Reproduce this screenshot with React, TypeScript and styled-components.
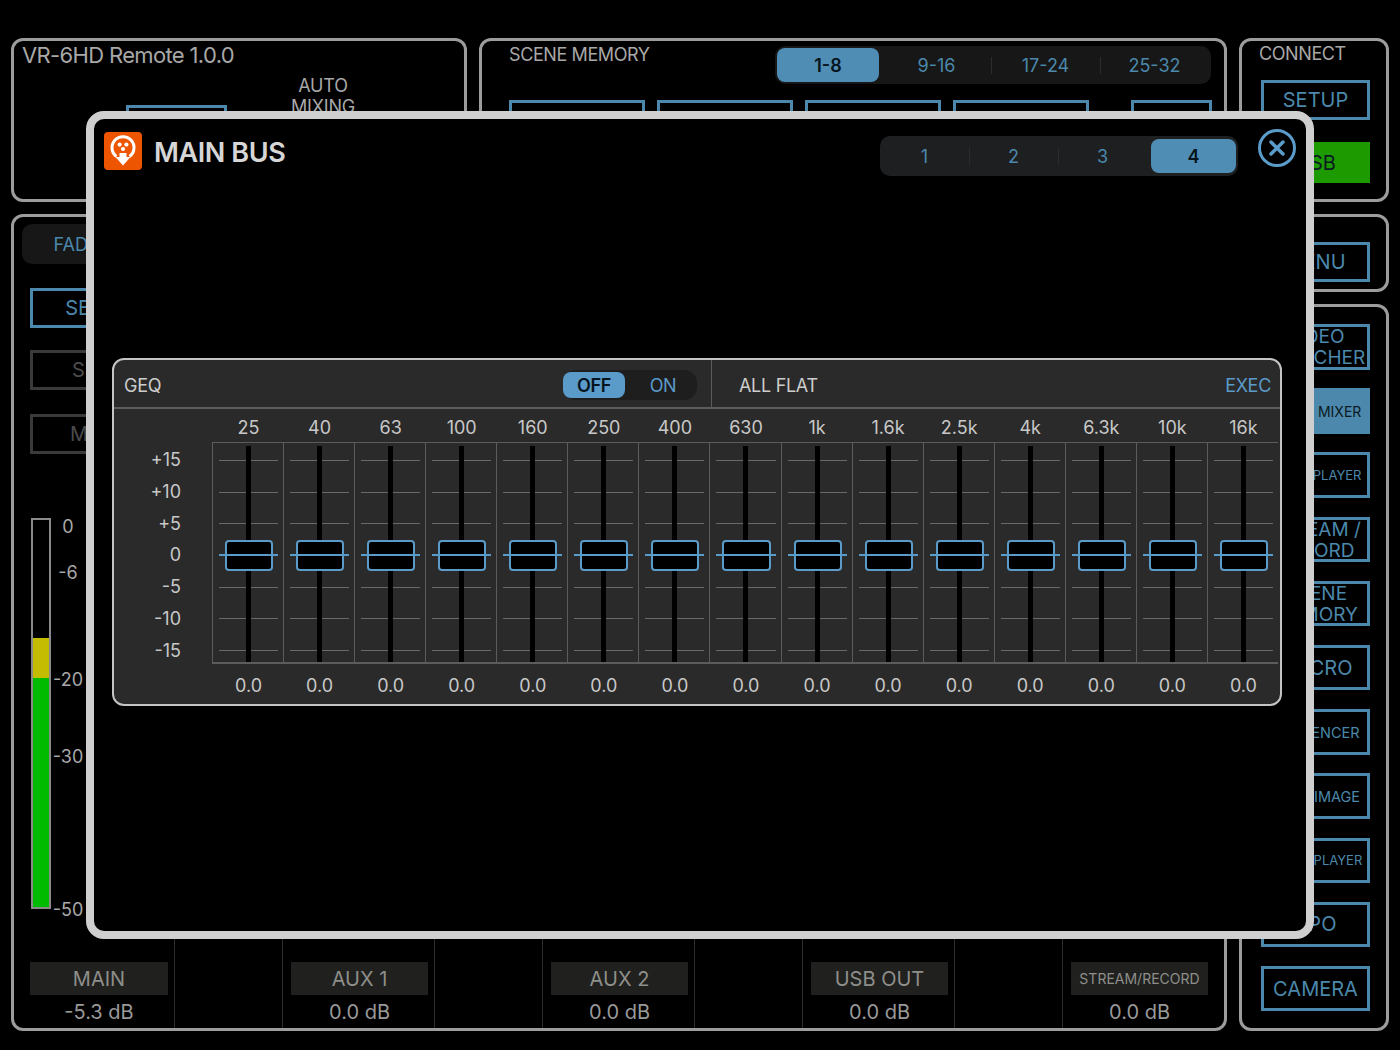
import { Fragment } from "react";
import styled, { createGlobalStyle } from "styled-components";

const BLUE = "#4b88ab";
const BRIGHT = "#5b9bc9";
const FONT = `Inter, "Liberation Sans", sans-serif`;

const FREQS = ["25", "40", "63", "100", "160", "250", "400", "630", "1k", "1.6k", "2.5k", "4k", "6.3k", "10k", "16k"];
const SCALE = ["+15", "+10", "+5", "0", "-5", "-10", "-15"];
const SIDE_BUTTONS = [
    { label: "VIDEO\nSWITCHER", size: 19 },
    { label: "AUDIO MIXER", size: 14, active: true },
    { label: "VIDEO PLAYER", size: 13 },
    { label: "STREAM /\nRECORD", size: 19 },
    { label: "SCENE\nMEMORY", size: 19 },
    { label: "MACRO", size: 20 },
    { label: "SEQUENCER", size: 14.5 },
    { label: "STILL IMAGE", size: 14.5 },
    { label: "AUDIO PLAYER", size: 13 },
    { label: "VPO", size: 20 },
    { label: "CAMERA", size: 20 },
];
const CHANNELS = [
    { name: "MAIN", value: "-5.3 dB" },
    { name: "AUX 1", value: "0.0 dB" },
    { name: "AUX 2", value: "0.0 dB" },
    { name: "USB OUT", value: "0.0 dB" },
    { name: "STREAM/RECORD", value: "0.0 dB", small: true },
];

const GlobalStyle = createGlobalStyle`
    html, body { margin: 0; padding: 0; background: #000; }
    * { box-sizing: border-box; }
`;

const Page = styled.div`
    position: relative;
    width: 1400px;
    height: 1050px;
    overflow: hidden;
    background: #000;
    font-family: ${FONT};
    color: #a8a8a8;
    display: grid;
    grid-template-columns: 456px 748px 150px;
    grid-template-rows: 164px 817px;
    gap: 12px;
    padding: 38px 11px 19px;
`;

const Panel = styled.section`
    border: 3px solid #9c9c9c;
    border-radius: 12px;
    min-height: 0;
`;

const TopLeftPanel = styled(Panel)`
    padding: 1px 8px;
`;

const AppTitle = styled.div`
    font-size: 22px;
    line-height: 26px;
    letter-spacing: -0.65px;
`;

const AutoRow = styled.div`
    display: flex;
    align-items: flex-start;
    margin-top: 7px;
`;

const AutoLabel = styled.div`
    width: 100px;
    margin-left: 46px;
    font-size: 18px;
    line-height: 21px;
    letter-spacing: -0.2px;
    text-align: center;
`;

const OutlineButton = styled.div<{ $w?: number; $h?: number; $active?: boolean; $green?: boolean; $dim?: boolean; $size?: number }>`
    width: ${(p) => (p.$w ? `${p.$w}px` : "100%")};
    height: ${(p) => p.$h ?? 40}px;
    flex: none;
    display: flex;
    align-items: center;
    justify-content: center;
    padding-top: 1px;
    text-align: center;
    white-space: pre-line;
    font-size: ${(p) => p.$size ?? 20}px;
    line-height: 21px;
    border: 3px solid ${(p) => (p.$green ? "#1c9a00" : p.$dim ? "#3a3a3a" : BLUE)};
    color: ${(p) => (p.$active || p.$green ? "#0b1a22" : p.$dim ? "#4c4c4c" : BLUE)};
    background: ${(p) => (p.$green ? "#1c9a00" : p.$active ? BLUE : "transparent")};
`;

const AutoButton = styled(OutlineButton)`
    margin: 30px 0 0 104px;
`;

const ScenePanel = styled(Panel)`
    padding: 5px 13px 0 27px;
`;

const SceneHeader = styled.div`
    display: flex;
    align-items: flex-start;
    justify-content: space-between;
`;

const SectionLabel = styled.div`
    font-size: 18px;
    line-height: 22px;
    letter-spacing: -0.4px;
`;

const SceneLabel = styled(SectionLabel)`
    margin-top: -2px;
`;

const Segments = styled.div<{ $w: number; $h: number; $bg: string }>`
    width: ${(p) => p.$w}px;
    height: ${(p) => p.$h}px;
    display: flex;
    padding: 2px;
    border-radius: 10px;
    background: ${(p) => p.$bg};
    flex: none;
`;

const Segment = styled.div<{ $active?: boolean; $w?: number; $ml?: number; $mr?: number }>`
    flex: ${(p) => (p.$w ? `none` : "1 1 0")};
    width: ${(p) => (p.$w ? `${p.$w}px` : "auto")};
    display: flex;
    align-items: center;
    justify-content: center;
    font-size: 18px;
    font-weight: ${(p) => (p.$active ? 600 : 400)};
    border-radius: 8px;
    margin: 0 ${(p) => p.$mr ?? 0}px 0 ${(p) => p.$ml ?? 0}px;
    color: ${(p) => (p.$active ? "#06141d" : BLUE)};
    background: ${(p) => (p.$active ? "#4f8db5" : "transparent")};
    position: relative;

    & + &::before {
        content: "";
        position: absolute;
        left: 0;
        top: 25%;
        height: 50%;
        width: 1px;
        background: #2b2c2e;
    }
`;

const SceneBoxes = styled.div`
    display: flex;
    gap: 12px;
    margin-top: 16px;
`;

const LastSceneBox = styled(OutlineButton)`
    margin-left: 30px;
`;

const ConnectPanel = styled(Panel)`
    padding: 2px 16px 0 19px;
    display: flex;
    flex-direction: column;
`;

const ConnectLabel = styled(SectionLabel)`
    margin: 0 0 15px -2px;
`;

const ConnectStack = styled.div`
    display: flex;
    flex-direction: column;
    gap: 22px;
`;

const MixPanel = styled(Panel)`
    grid-column: 1 / 3;
    display: flex;
    flex-direction: column;
`;

const MixBody = styled.div`
    flex: 1;
    padding: 7px 0 0 8px;
    display: flex;
    flex-direction: column;
    align-items: flex-start;
`;

const FaderTabs = styled(Segments)`
    margin-bottom: 24px;
`;

const MixButton = styled(OutlineButton)<{ $after: number }>`
    margin: 0 0 ${(p) => p.$after}px 8px;
`;

const MeterRow = styled.div`
    display: flex;
    margin: 42px 0 0 9px;
`;

const Meter = styled.div`
    width: 20px;
    height: 391px;
    border: 2px solid #8a8a8a;
    display: flex;
    flex-direction: column;
    background: #000;
`;

const MeterFill = styled.div<{ $h: number; $color: string }>`
    height: ${(p) => p.$h}px;
    background: ${(p) => p.$color};
`;

const MeterScale = styled.div`
    width: 34px;
    display: grid;
    grid-template-rows: 46px 107px 77px 153px 20px;
    font-size: 18px;
    line-height: 18px;
    text-align: center;
`;

const Strip = styled.div`
    height: 91px;
    display: grid;
    grid-template-columns: 160px 108px 152px 108px 152px 108px 152px 108px 152px;
`;

const StripCell = styled.div`
    padding: 25px 6px 0 8px;

    &:first-child { padding-left: 16px; }
    & + & { border-left: 1px solid #2c2c2c; }
`;

const ChannelName = styled.div<{ $small?: boolean }>`
    height: 33px;
    background: #20211f;
    display: flex;
    align-items: center;
    justify-content: center;
    font-size: ${(p) => (p.$small ? 14 : 20)}px;
    color: #8e8e8a;
`;

const ChannelValue = styled.div`
    margin-top: 5px;
    text-align: center;
    font-size: 20px;
    line-height: 24px;
    color: #999;
`;

const SideColumn = styled.div`
    grid-column: 3;
    grid-row: 2;
    display: flex;
    flex-direction: column;
    gap: 12px;
    min-height: 0;
`;

const MenuPanel = styled(Panel)`
    height: 78px;
    padding: 25px 16px 0 19px;
    flex: none;
`;

const SidePanel = styled(Panel)`
    flex: 1;
    padding: 17px 16px 0 19px;
    display: flex;
    flex-direction: column;
    gap: 18.7px;
`;

const Modal = styled.div`
    position: absolute;
    left: 86px;
    top: 111px;
    width: 1228px;
    height: 828px;
    background: #000;
    border: 8px solid #cfcfcf;
    border-radius: 18px;
    padding: 13px 18px 0 10px;
    color: #cdcdcd;
`;

const ModalHeader = styled.header`
    display: flex;
    align-items: flex-start;
    height: 226px;
`;

const Logo = styled.svg`
    width: 38px;
    height: 38px;
    flex: none;
`;

const ModalTitle = styled.h1`
    margin: 0 0 0 12px;
    flex: 1;
    font-size: 27px;
    line-height: 41px;
    font-weight: 600;
    letter-spacing: -0.4px;
    color: #d6d6d6;
`;

const BusTabs = styled(Segments)`
    margin-top: 4px;
    padding: 3px 2px 3px 0;
`;

const CloseButton = styled.div`
    width: 38px;
    height: 38px;
    margin: -3px -8px 0 20px;
    flex: none;
    display: flex;
    align-items: center;
    justify-content: center;
    border: 3px solid ${BRIGHT};
    border-radius: 50%;
    color: ${BRIGHT};
`;

const GeqPanel = styled.div`
    margin-left: 8px;
    margin-right: 6px;
    height: 348px;
    background: #2a2a2a;
    border: 2px solid #c4c4c4;
    border-radius: 12px;
    overflow: hidden;
`;

const GeqHeader = styled.div`
    height: 49px;
    display: flex;
    border-bottom: 2px solid #5c5c5c;
    font-size: 18px;
    letter-spacing: -0.3px;
    color: #cdcdcd;
`;

const GeqLeft = styled.div`
    width: 598px;
    padding: 3px 14px 0 10px;
    display: flex;
    align-items: center;
    justify-content: space-between;
    border-right: 1px solid #5c5c5c;
`;

const GeqRight = styled.div`
    flex: 1;
    padding: 3px 9px 0 27px;
    display: flex;
    align-items: center;
    justify-content: space-between;
`;

const ExecLabel = styled.span`
    color: ${BRIGHT};
`;

const GeqToggle = styled(Segments)`
    border-radius: 13px;
    padding: 2px 0;
`;

const ToggleOption = styled.div<{ $active?: boolean }>`
    flex: none;
    width: ${(p) => (p.$active ? 62 : 72)}px;
    padding-left: ${(p) => (p.$active ? 0 : 4)}px;
    display: flex;
    align-items: center;
    justify-content: center;
    border-radius: 8px;
    font-size: 18px;
    font-weight: ${(p) => (p.$active ? 600 : 400)};
    color: ${(p) => (p.$active ? "#06141d" : BRIGHT)};
    background: ${(p) => (p.$active ? BRIGHT : "transparent")};
`;

const GeqGrid = styled.div`
    display: grid;
    grid-template-columns: 98px repeat(15, 71.07px);
    grid-template-rows: 33px 222px 40px;
    font-size: 18px;
    color: #c8c8c8;
`;

const FreqLabel = styled.div`
    display: flex;
    align-items: center;
    justify-content: center;
    padding: 4px 0 0 2px;
`;

const ValueLabel = styled(FreqLabel)`
    padding-top: 2px;
`;

const ScaleColumn = styled.div`
    padding: 8px 31px 3px 0;
    display: flex;
    flex-direction: column;
    justify-content: space-between;
    align-items: flex-end;
    line-height: 20px;
`;

const FaderCell = styled.div`
    position: relative;
    padding: 17px 5px 11px 6px;
    display: flex;
    flex-direction: column;
    justify-content: space-between;
    border-top: 1px solid #5c5c5c;
    border-bottom: 2px solid #5c5c5c;
    border-left: 1px solid #5c5c5c;
`;

const Tick = styled.div`
    height: 1px;
    background: #6a6a6a;
`;

const Track = styled.div`
    position: absolute;
    left: calc(50% - 2px);
    top: 3px;
    bottom: 0;
    width: 5px;
    background: #000;
`;

const Handle = styled.div`
    position: absolute;
    left: 12px;
    right: 10px;
    top: 97px;
    height: 31px;
    background: #000;
    border: 2px solid ${BRIGHT};
    border-radius: 4px;
`;

const CenterLine = styled.div`
    position: absolute;
    left: 6px;
    right: 5px;
    top: 111px;
    height: 2px;
    background: ${BRIGHT};
`;

const Fader = () => (
    <FaderCell>
        {SCALE.map((s) => <Tick key={s} />)}
        <Track />
        <Handle />
        <CenterLine />
    </FaderCell>
);

export default function App() {
    return (
        <>
            <GlobalStyle />
            <Page>
                <TopLeftPanel>
                    <AppTitle>VR-6HD Remote 1.0.0</AppTitle>
                    <AutoRow>
                        <AutoButton $w={101} $h={50} />
                        <AutoLabel>AUTO<br />MIXING</AutoLabel>
                    </AutoRow>
                </TopLeftPanel>

                <ScenePanel>
                    <SceneHeader>
                        <SceneLabel>SCENE MEMORY</SceneLabel>
                        <Segments $w={436} $h={38} $bg="#161716">
                            <Segment $active $w={102} $mr={3}>1-8</Segment>
                            <Segment>9-16</Segment>
                            <Segment>17-24</Segment>
                            <Segment>25-32</Segment>
                        </Segments>
                    </SceneHeader>
                    <SceneBoxes>
                        <OutlineButton $w={136} $h={50} />
                        <OutlineButton $w={136} $h={50} />
                        <OutlineButton $w={136} $h={50} />
                        <OutlineButton $w={136} $h={50} />
                        <LastSceneBox $w={81} $h={50} />
                    </SceneBoxes>
                </ScenePanel>

                <ConnectPanel>
                    <ConnectLabel>CONNECT</ConnectLabel>
                    <ConnectStack>
                        <OutlineButton>SETUP</OutlineButton>
                        <OutlineButton $green $h={41}>USB</OutlineButton>
                    </ConnectStack>
                </ConnectPanel>

                <MixPanel>
                    <MixBody>
                        <FaderTabs $w={120} $h={40} $bg="#161716">
                            <Segment>FADER</Segment>
                        </FaderTabs>
                        <MixButton $w={146} $after={22}>SELECT</MixButton>
                        <MixButton $w={120} $dim $after={24}>SEL</MixButton>
                        <MixButton $w={138} $dim $after={22}>MUTE</MixButton>
                        <MeterRow>
                            <Meter>
                                <MeterFill $h={118} $color="#000" />
                                <MeterFill $h={40} $color="#c4bc00" />
                                <MeterFill $h={229} $color="#00bb00" />
                            </Meter>
                            <MeterScale>
                                <div>0</div>
                                <div>-6</div>
                                <div>-20</div>
                                <div>-30</div>
                                <div>-50</div>
                            </MeterScale>
                        </MeterRow>
                    </MixBody>
                    <Strip>
                        {CHANNELS.map((c, i) => (
                            <Fragment key={c.name}>
                                {i > 0 && <StripCell />}
                                <StripCell>
                                    <ChannelName $small={c.small}>{c.name}</ChannelName>
                                    <ChannelValue>{c.value}</ChannelValue>
                                </StripCell>
                            </Fragment>
                        ))}
                    </Strip>
                </MixPanel>

                <SideColumn>
                    <MenuPanel>
                        <OutlineButton>MENU</OutlineButton>
                    </MenuPanel>
                    <SidePanel>
                        {SIDE_BUTTONS.map((b) => (
                            <OutlineButton key={b.label} $h={45.5} $active={b.active} $size={b.size}>
                                {b.label}
                            </OutlineButton>
                        ))}
                    </SidePanel>
                </SideColumn>

                <Modal>
                    <ModalHeader>
                        <Logo viewBox="0 0 38 38">
                            <rect width="38" height="38" rx="4" fill="#ee5500" />
                            <path d="M12.500 24.500 A11 11 0 1 1 25.500 24.500" fill="none" stroke="#fff" strokeWidth="3" />
                            <circle cx="15.600" cy="12.600" r="2.100" fill="#fff" />
                            <circle cx="22.400" cy="12.600" r="2.100" fill="#fff" />
                            <circle cx="19" cy="17" r="2.100" fill="#fff" />
                            <path d="M15.500 21 H22.500 V25 H26.500 L19 33.500 L11.500 25 H15.500 Z" fill="#fff" />
                        </Logo>
                        <ModalTitle>MAIN BUS</ModalTitle>
                        <BusTabs $w={358} $h={40} $bg="#1e1f21">
                            <Segment>1</Segment>
                            <Segment>2</Segment>
                            <Segment>3</Segment>
                            <Segment $active $w={85} $ml={4}>4</Segment>
                        </BusTabs>
                        <CloseButton>
                            <svg width="20" height="20" viewBox="0 0 20 20">
                                <path d="M4 4 L16 16 M16 4 L4 16" stroke="currentColor" strokeWidth="3.500" strokeLinecap="round" />
                            </svg>
                        </CloseButton>
                    </ModalHeader>

                    <GeqPanel>
                        <GeqHeader>
                            <GeqLeft>
                                <span>GEQ</span>
                                <GeqToggle $w={134} $h={30} $bg="#1e1e1e">
                                    <ToggleOption $active>OFF</ToggleOption>
                                    <ToggleOption>ON</ToggleOption>
                                </GeqToggle>
                            </GeqLeft>
                            <GeqRight>
                                <span>ALL FLAT</span>
                                <ExecLabel>EXEC</ExecLabel>
                            </GeqRight>
                        </GeqHeader>
                        <GeqGrid>
                            <div />
                            {FREQS.map((f) => <FreqLabel key={f}>{f}</FreqLabel>)}
                            <ScaleColumn>
                                {SCALE.map((s) => <div key={s}>{s}</div>)}
                            </ScaleColumn>
                            {FREQS.map((f) => <Fader key={f} />)}
                            <div />
                            {FREQS.map((f) => <ValueLabel key={f}>0.0</ValueLabel>)}
                        </GeqGrid>
                    </GeqPanel>
                </Modal>
            </Page>
        </>
    );
}
